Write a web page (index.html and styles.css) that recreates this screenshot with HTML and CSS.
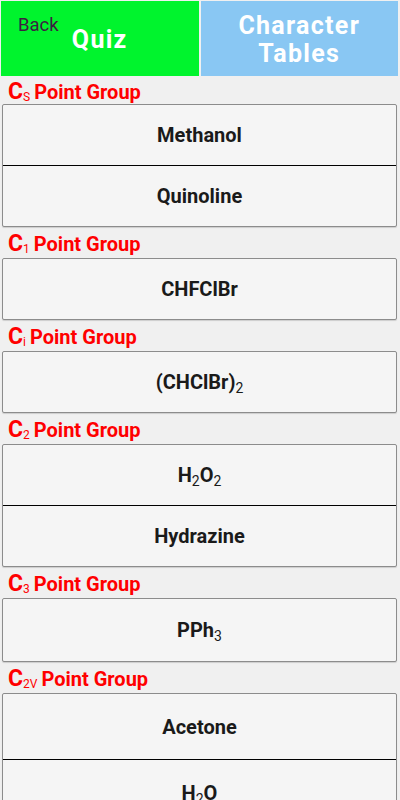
FILE: index.html
```html
<!DOCTYPE html>
<html>
<head>
<meta charset="utf-8">
<link rel="stylesheet" href="styles.css">
</head>
<body>
<div class="top">
  <div class="tab tab-quiz">
    <span class="back">Back</span>
    <span class="tab-label">Quiz</span>
  </div>
  <div class="tab tab-tables">
    <span class="tab-label">Character<br>Tables</span>
  </div>
</div>
<div class="list">
  <div class="group-title"><span class="big">C</span><sub>S</sub> Point Group</div>
  <div class="card">
    <div class="item"><span>Methanol</span></div>
    <div class="item"><span>Quinoline</span></div>
  </div>
  <div class="group-title"><span class="big">C</span><sub>1</sub> Point Group</div>
  <div class="card">
    <div class="item"><span>CHFClBr</span></div>
  </div>
  <div class="group-title"><span class="big">C</span><sub>i</sub> Point Group</div>
  <div class="card">
    <div class="item"><span>(CHClBr)<sub>2</sub></span></div>
  </div>
  <div class="group-title"><span class="big">C</span><sub>2</sub> Point Group</div>
  <div class="card">
    <div class="item"><span>H<sub>2</sub>O<sub>2</sub></span></div>
    <div class="item"><span>Hydrazine</span></div>
  </div>
  <div class="group-title"><span class="big">C</span><sub>3</sub> Point Group</div>
  <div class="card">
    <div class="item tall"><span>PPh<sub>3</sub></span></div>
  </div>
  <div class="group-title"><span class="big">C</span><sub>2V</sub> Point Group</div>
  <div class="card">
    <div class="item taller"><span>Acetone</span></div>
    <div class="item taller"><span>H<sub>2</sub>O</span></div>
  </div>
</div>
</body>
</html>
```
FILE: styles.css
```css
html, body {
  margin: 0;
  padding: 0;
}
body {
  background: #f0f0f0;
  font-family: Roboto, "Liberation Sans", sans-serif;
  width: 400px;
}
.top {
  display: flex;
  gap: 2px;
  padding: 1px 2px 0 1px;
  height: 75px;
}
.tab {
  flex: 1;
  display: flex;
  align-items: center;
  justify-content: center;
  color: #fff;
  font-weight: bold;
  font-size: 25px;
  letter-spacing: 1.3px;
  text-align: center;
  line-height: 28px;
}
.tab-quiz {
  background: #00f42d;
  position: relative;
}
.tab-tables {
  background: #89c7f3;
}
.tab-quiz .tab-label {
  margin-top: 2px;
}
.tab-tables .tab-label {
  margin-top: 3px;
}
.back {
  position: absolute;
  left: 17px;
  top: 13px;
  font-size: 18.5px;
  font-weight: normal;
  letter-spacing: 0;
  color: #3b2040;
  line-height: 22px;
}
.list {
  padding: 0 3px 0 2px;
}
.group-title {
  height: 31px;
  box-sizing: border-box;
  padding: 4px 0 0 6px;
  color: #ff0000;
  font-weight: bold;
  font-size: 20px;
  line-height: 26px;
  white-space: nowrap;
}
.group-title:first-child {
  height: 28px;
  padding-top: 3px;
}
.group-title .big {
  font-size: 23px;
}
.group-title sub {
  font-size: 12px;
  font-weight: normal;
  vertical-align: -2px;
  line-height: 0;
  margin-left: 0;
  margin-right: -1px;
}
.card {
  background: #f5f5f5;
  border: 1px solid #8c8c8c;
  border-radius: 2px;
  box-shadow: 0 1px 1px rgba(0,0,0,0.15);
}
.item {
  height: 60px;
  display: flex;
  align-items: center;
  justify-content: center;
  color: #1a1a1a;
  font-weight: bold;
  font-size: 20px;
}
.item + .item {
  border-top: 1px solid #000;
}
.item.tall {
  height: 62px;
}
.item.taller {
  height: 65px;
}
.item sub {
  font-size: 14px;
  font-weight: normal;
  vertical-align: -4px;
  line-height: 0;
}
```
